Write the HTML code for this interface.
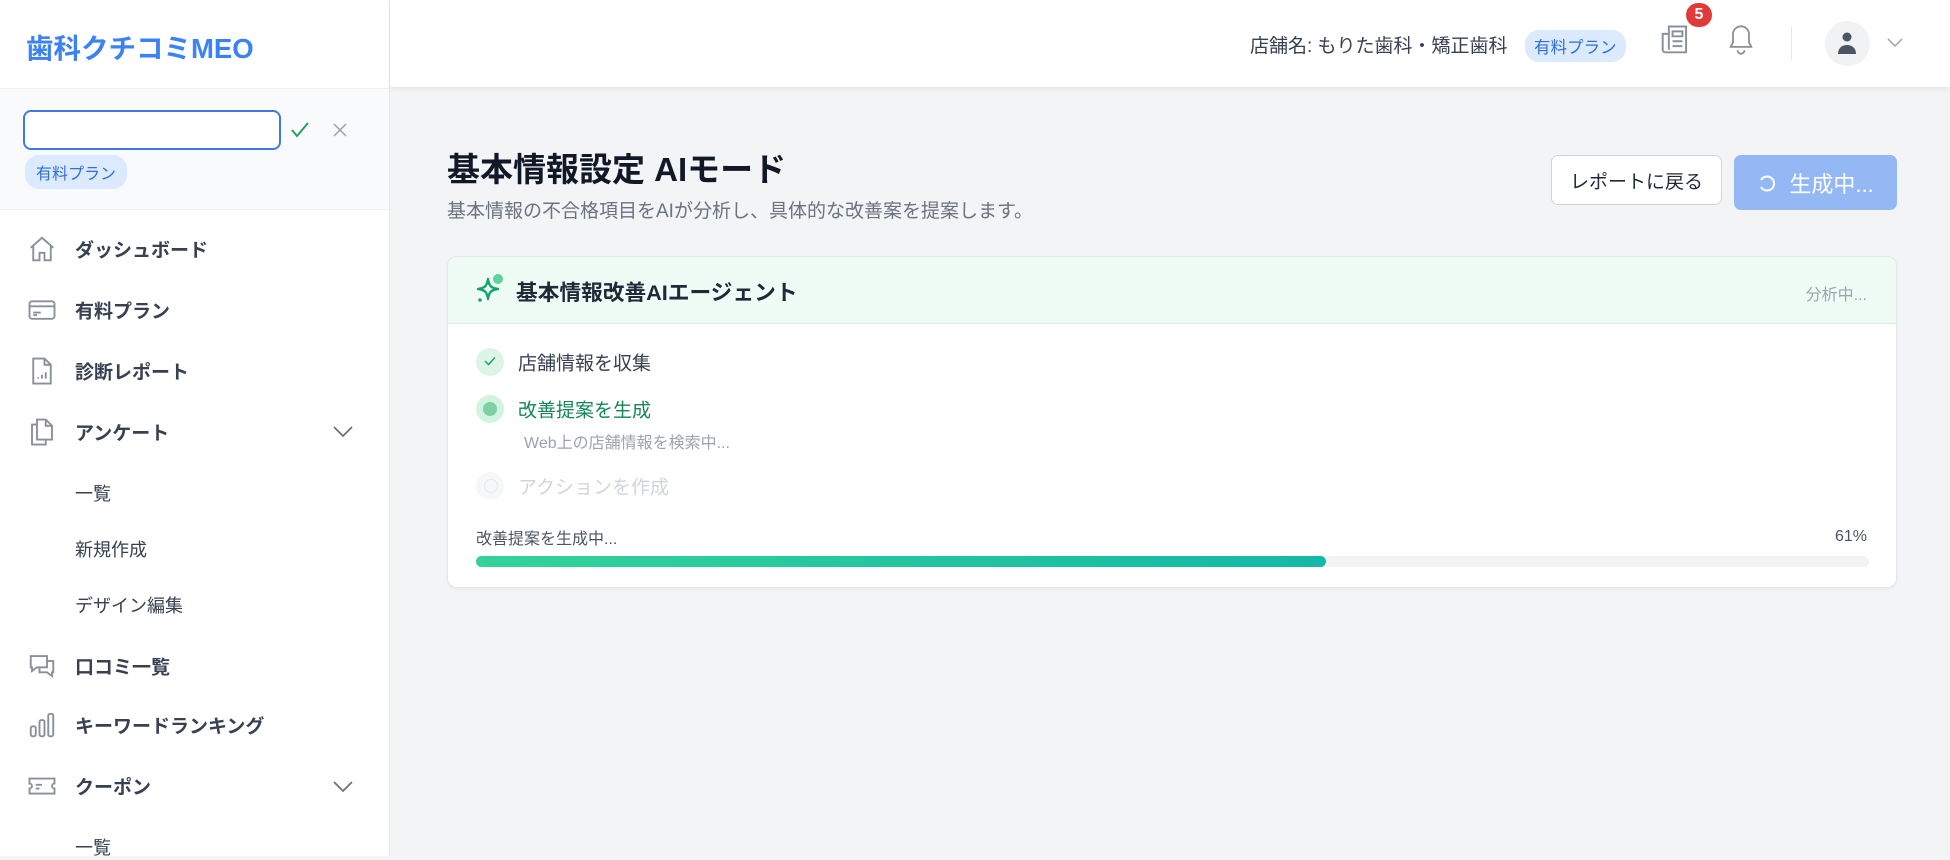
<!DOCTYPE html>
<html><head><meta charset="utf-8"><style>
*{box-sizing:border-box;margin:0;padding:0}
body{width:1950px;height:856px;overflow:hidden;background:#f3f4f6;font-family:"Liberation Sans","Noto Sans CJK JP",sans-serif;color:#1f2937;position:relative}
.abs{position:absolute}
.side{left:0;top:0;width:390px;height:856px;background:#fff;border-right:1px solid #e5e7eb}
.logo{left:26px;top:26px;font-size:27.5px;font-weight:bold;color:#3b82f6;letter-spacing:0}
.top{left:0;top:88px;width:389px;height:122px;background:#f9fafb;border-top:1px solid #eef0f2;border-bottom:1px solid #eef0f2}
.inp{left:23px;top:110px;width:258px;height:40px;border:2.5px solid #3b7be0;border-radius:8px;background:#fff}
.badge{background:#dbeafe;color:#2f6fd6;border-radius:14px;font-size:16px;padding:5px 11px;white-space:nowrap}
.nav{left:75px;font-size:19px;font-weight:bold;color:#374151;transform:translateY(-50%)}
.sub{left:75px;font-size:18px;color:#374151;transform:translateY(-50%)}
.ic{left:27px;transform:translateY(-50%)}
.hdr{left:390px;top:0;width:1560px;height:87px;background:#fff;box-shadow:0 2px 4px rgba(0,0,0,.06)}
.btn1{left:1551px;top:155px;width:171px;height:50px;border:1.5px solid #d1d5db;border-radius:7px;background:#fff;font-size:19px;display:flex;align-items:center;justify-content:center}
.btn2{left:1734px;top:155px;width:163px;height:55px;border-radius:7px;background:#93b8f4;color:#fff;font-size:22px;display:flex;align-items:center;justify-content:center;gap:12px}
.card{left:447px;top:256px;width:1450px;height:332px;background:#fff;border:1px solid #e5e7eb;border-radius:10px;overflow:hidden;box-shadow:0 1px 3px rgba(0,0,0,.05)}
.ch{left:0;top:0;width:100%;height:67px;background:#effcf6;border-bottom:1.5px solid #dfe9e4}
.circ{width:28px;height:28px;border-radius:50%;left:28px;transform:translateY(-50%)}
</style></head><body>
<div class="abs side"></div>
<div class="abs logo">歯科クチコミMEO</div>
<div class="abs top"></div>
<div class="abs inp"></div>
<svg class="abs" style="left:290px;top:121px" width="20" height="18" viewBox="0 0 20 18"><path d="M2 9l5 6L18 2" stroke="#2f9e55" stroke-width="2" fill="none"/></svg>
<svg class="abs" style="left:333px;top:123px" width="14" height="14" viewBox="0 0 14 14"><path d="M1 1l12 12M13 1L1 13" stroke="#9ca3af" stroke-width="1.5"/></svg>
<div class="abs badge" style="left:25px;top:155px">有料プラン</div>

<svg class="abs ic" style="top:249px" width="30" height="30" viewBox="0 0 24 24" fill="none" stroke="#8a9099" stroke-width="1.5"><path d="M3 11l9-8 9 8M5 9.5V21h5v-6h4v6h5V9.5"/></svg>
<div class="abs nav" style="top:249px">ダッシュボード</div>
<svg class="abs ic" style="top:310px" width="30" height="30" viewBox="0 0 24 24" fill="none" stroke="#8a9099" stroke-width="1.5"><rect x="2" y="5" width="20" height="14" rx="2"/><path d="M2 9h20M5 14h6M5 16h3"/></svg>
<div class="abs nav" style="top:310px">有料プラン</div>
<svg class="abs ic" style="top:371px" width="30" height="30" viewBox="0 0 24 24" fill="none" stroke="#8a9099" stroke-width="1.5"><path d="M5 2h9l5 5v15H5z M14 2v5h5M9 18v-1M12 18v-3M15 18v-5"/></svg>
<div class="abs nav" style="top:371px">診断レポート</div>
<svg class="abs ic" style="top:432px" width="30" height="30" viewBox="0 0 24 24" fill="none" stroke="#8a9099" stroke-width="1.5"><path d="M8 2h7l5 5v11H8z M15 2v5h5M8 6H4v16h11v-4"/></svg>
<div class="abs nav" style="top:432px">アンケート</div>
<svg class="abs" style="left:332px;top:425px" width="22" height="14" viewBox="0 0 22 14"><path d="M2 2l9 9 9-9" stroke="#6b7280" stroke-width="1.8" fill="none"/></svg>
<div class="abs sub" style="top:493px">一覧</div>
<div class="abs sub" style="top:549px">新規作成</div>
<div class="abs sub" style="top:605px">デザイン編集</div>
<svg class="abs ic" style="top:666px" width="30" height="30" viewBox="0 0 24 24" fill="none" stroke="#8a9099" stroke-width="1.5"><path d="M3 4h13v9H8l-4 3v-3H3z M16 8h5v9h-1v3l-4-3h-6v-4"/></svg>
<div class="abs nav" style="top:666px">口コミ一覧</div>
<svg class="abs ic" style="top:725px" width="30" height="30" viewBox="0 0 24 24" fill="none" stroke="#8a9099" stroke-width="1.5"><rect x="3" y="13" width="4" height="8" rx="1.5"/><rect x="10" y="8" width="4" height="13" rx="1.5"/><rect x="17" y="3" width="4" height="18" rx="1.5"/></svg>
<div class="abs nav" style="top:725px">キーワードランキング</div>
<svg class="abs ic" style="top:786px" width="30" height="30" viewBox="0 0 24 24" fill="none" stroke="#8a9099" stroke-width="1.5"><path d="M2 6h20v4a2 2 0 000 4v4H2v-4a2 2 0 000-4z M7 11h5M7 14h3"/></svg>
<div class="abs nav" style="top:786px">クーポン</div>
<svg class="abs" style="left:332px;top:780px" width="22" height="14" viewBox="0 0 22 14"><path d="M2 2l9 9 9-9" stroke="#6b7280" stroke-width="1.8" fill="none"/></svg>
<div class="abs sub" style="top:847px">一覧</div>

<div class="abs hdr"></div>
<div class="abs" style="left:1250px;top:31px;font-size:19px;color:#374151">店舗名: もりた歯科・矯正歯科</div>
<div class="abs badge" style="left:1525px;top:30px;font-size:16.5px;padding:4px 9px">有料プラン</div>
<svg class="abs" style="left:1660px;top:24px" width="30" height="32" viewBox="0 0 24 26" fill="none" stroke="#8a9099" stroke-width="1.6"><path d="M7 2h14v21H4a2 2 0 01-2-2V8h5z M7 2v19M10 6h8v4h-8zM10 14h8M10 18h8"/></svg>
<div class="abs" style="left:1686px;top:3px;width:26px;height:24px;border-radius:12px;background:#e03b3b;color:#fff;font-size:16px;font-weight:bold;text-align:center;line-height:24px">5</div>
<svg class="abs" style="left:1727px;top:24px" width="28" height="32" viewBox="0 0 24 28" fill="none" stroke="#8a9099" stroke-width="1.6"><path d="M12 2a7 7 0 00-7 7v7l-2 4h18l-2-4V9a7 7 0 00-7-7z M9 23a3 3 0 006 0"/></svg>
<div class="abs" style="left:1791px;top:27px;width:1px;height:33px;background:#e5e7eb"></div>
<div class="abs" style="left:1825px;top:21px;width:45px;height:45px;border-radius:50%;background:#f1f2f4"></div>
<svg class="abs" style="left:1836px;top:31px" width="22" height="24" viewBox="0 0 22 24"><circle cx="11" cy="6" r="4.5" fill="#4b5563"/><path d="M2 23c0-6 4-9 9-9s9 3 9 9z" fill="#4b5563"/></svg>
<svg class="abs" style="left:1887px;top:38px" width="16" height="10" viewBox="0 0 16 10"><path d="M1 1l7 7 7-7" stroke="#9ca3af" stroke-width="1.5" fill="none"/></svg>

<div class="abs" style="left:447px;top:143px;font-size:33px;font-weight:bold;color:#111827">基本情報設定 AIモード</div>
<div class="abs" style="left:447px;top:196px;font-size:19px;color:#6b7280">基本情報の不合格項目をAIが分析し、具体的な改善案を提案します。</div>
<div class="abs btn1">レポートに戻る</div>
<div class="abs btn2"><svg width="20" height="20" viewBox="0 0 20 20"><path d="M4 7a7 7 0 1 1 0 7" stroke="#fff" stroke-width="2" fill="none"/></svg>生成中...</div>

<div class="abs card">
<div class="abs ch"></div>
<svg class="abs" style="left:26px;top:16px" width="36" height="34" viewBox="0 0 36 34"><path d="M14 6c1 7 3 9 10 10-7 1-9 3-10 10-1-7-3-9-10-10 7-1 9-3 10-10z" stroke="#10a56e" stroke-width="2.4" fill="none" stroke-linejoin="round"/><circle cx="6" cy="27" r="1.8" fill="#10a56e"/><circle cx="24" cy="6" r="5" fill="#5fd39c"/></svg>
<div class="abs" style="left:68px;top:19px;font-size:21.7px;font-weight:bold;color:#1f2937">基本情報改善AIエージェント</div>
<div class="abs" style="right:29px;top:24px;font-size:16px;color:#9ca3af">分析中...</div>

<div class="abs circ" style="top:105px;background:#dcf5e7"></div>
<svg class="abs" style="left:36px;top:99px" width="12" height="10" viewBox="0 0 12 10"><path d="M1 5l3.5 3.5L11 1.5" stroke="#21a365" stroke-width="1.5" fill="none"/></svg>
<div class="abs" style="left:70px;top:105px;transform:translateY(-50%);font-size:19px;color:#374151">店舗情報を収集</div>

<div class="abs circ" style="top:152px;background:#d3f3e2"></div>
<div class="abs" style="left:35px;top:145px;width:14px;height:14px;border-radius:50%;background:#7fcfa5"></div>
<div class="abs" style="left:70px;top:152px;transform:translateY(-50%);font-size:19px;color:#16855a">改善提案を生成</div>
<div class="abs" style="left:76px;top:184px;transform:translateY(-50%);font-size:16px;color:#9ca3af">Web上の店舗情報を検索中...</div>

<div class="abs circ" style="top:229px;background:#f6f7f8"></div>
<div class="abs" style="left:36px;top:222px;width:14px;height:14px;border-radius:50%;border:1.5px solid #e5e7eb"></div>
<div class="abs" style="left:70px;top:229px;transform:translateY(-50%);font-size:19px;color:#d1d5db">アクションを作成</div>

<div class="abs" style="left:28px;top:280px;transform:translateY(-50%);font-size:16px;color:#4b5563">改善提案を生成中...</div>
<div class="abs" style="right:29px;top:280px;transform:translateY(-50%);font-size:16px;color:#4b5563">61%</div>
<div class="abs" style="left:28px;top:299px;width:1393px;height:11px;border-radius:6px;background:#f1f3f5"></div>
<div class="abs" style="left:28px;top:299px;width:850px;height:11px;border-radius:6px;background:linear-gradient(90deg,#34d399,#14b8a6)"></div>
</div>
</body></html>
